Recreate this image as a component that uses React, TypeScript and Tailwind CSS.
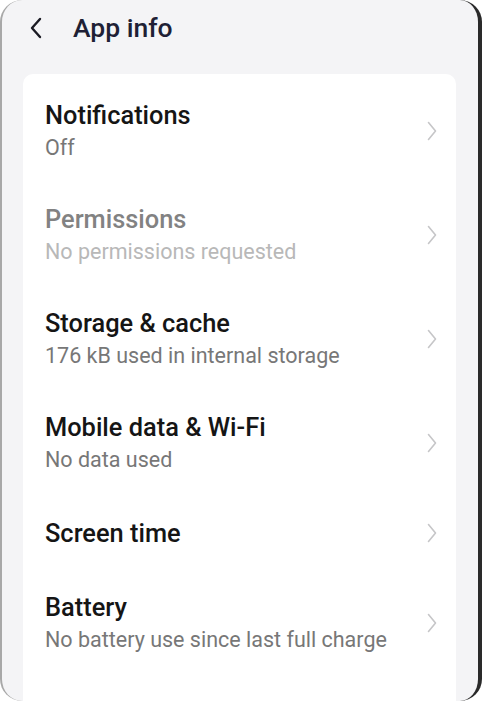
type Row = { title: string; sub?: string; disabled?: boolean };

const rows: Row[] = [
  { title: 'Notifications', sub: 'Off' },
  { title: 'Permissions', sub: 'No permissions requested', disabled: true },
  { title: 'Storage & cache', sub: '176 kB used in internal storage' },
  { title: 'Mobile data & Wi-Fi', sub: 'No data used' },
  { title: 'Screen time' },
  { title: 'Battery', sub: 'No battery use since last full charge' },
  { title: 'Open by default', sub: 'Allow app to open supported links' },
];

function Chevron() {
  return (
    <svg width="10" height="20" viewBox="0 0 10 20" fill="none" className="shrink-0">
      <path d="M1.5 1.5 L8.5 10 L1.5 18.5" stroke="#c6c6c8" strokeWidth="1.6" strokeLinecap="round" strokeLinejoin="round" />
    </svg>
  );
}

function BackArrow() {
  return (
    <svg width="14" height="22" viewBox="0 0 14 22" fill="none" className="shrink-0">
      <path d="M11 2 L3 11 L11 20" stroke="#1b1b24" strokeWidth="2.4" strokeLinecap="round" strokeLinejoin="round" />
    </svg>
  );
}

function InfoRow({ row }: { row: Row }) {
  return (
    <div className={`flex items-center justify-between pl-[22px] pr-[19px] ${row.sub ? 'h-[104px]' : 'h-[76px]'}`}>
      <div className="flex flex-col">
        <span className={`text-[25.4px] leading-[32px] font-medium ${row.disabled ? 'text-[#828282]' : 'text-[#151515]'}`}>
          {row.title}
        </span>
        {row.sub && (
          <span className={`text-[21.5px] leading-[33px] ${row.disabled ? 'text-[#b8b8b8]' : 'text-[#777777]'}`}>
            {row.sub}
          </span>
        )}
      </div>
      <Chevron />
    </div>
  );
}

export default function App() {
  return (
    <div className="w-[482px] h-[701px] bg-white" style={{ fontFamily: 'Roboto, "Noto Sans", sans-serif' }}>
      <div className="h-full flex flex-col rounded-[22px] bg-[#f4f4f6] border-l-2 border-l-[#a8a8a8] border-r-4 border-r-[#2a2a2a] overflow-hidden">
        <header className="h-[74px] flex items-center shrink-0 pl-[27px] pb-[18px]">
          <BackArrow />
          <h1 className="ml-[30px] text-[26.5px] font-medium text-[#201f35]">App info</h1>
        </header>
        <div className="ml-[21px] mr-[22px] flex-1 rounded-t-[10px] bg-white pt-[5px] overflow-hidden">
          {rows.map((r, i) => (
            <div key={r.title} className={i === rows.length - 1 ? 'mt-[5px]' : ''}>
              <InfoRow row={r} />
            </div>
          ))}
        </div>
      </div>
    </div>
  );
}
